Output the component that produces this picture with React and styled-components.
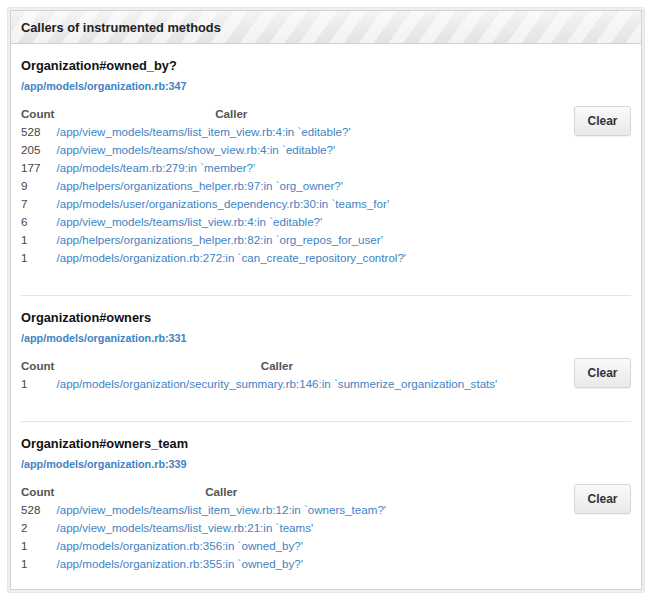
import { createGlobalStyle, styled } from "styled-components";

const GlobalStyle = createGlobalStyle`
  html, body {
    margin: 0;
    padding: 0;
    background: #ffffff;
  }
  body {
    font-family: "Liberation Sans", Arial, Helvetica, sans-serif;
    color: #333;
  }
`;

const methods = [
  {
    name: "Organization#owned_by?",
    location: "/app/models/organization.rb:347",
    callers: [
      [528, "/app/view_models/teams/list_item_view.rb:4:in `editable?'"],
      [205, "/app/view_models/teams/show_view.rb:4:in `editable?'"],
      [177, "/app/models/team.rb:279:in `member?'"],
      [9, "/app/helpers/organizations_helper.rb:97:in `org_owner?'"],
      [7, "/app/models/user/organizations_dependency.rb:30:in `teams_for'"],
      [6, "/app/view_models/teams/list_view.rb:4:in `editable?'"],
      [1, "/app/helpers/organizations_helper.rb:82:in `org_repos_for_user'"],
      [1, "/app/models/organization.rb:272:in `can_create_repository_control?'"],
    ],
  },
  {
    name: "Organization#owners",
    location: "/app/models/organization.rb:331",
    callers: [
      [1, "/app/models/organization/security_summary.rb:146:in `summerize_organization_stats'"],
    ],
  },
  {
    name: "Organization#owners_team",
    location: "/app/models/organization.rb:339",
    callers: [
      [528, "/app/view_models/teams/list_item_view.rb:12:in `owners_team?'"],
      [2, "/app/view_models/teams/list_view.rb:21:in `teams'"],
      [1, "/app/models/organization.rb:356:in `owned_by?'"],
      [1, "/app/models/organization.rb:355:in `owned_by?'"],
    ],
  },
];

export default function App() {
  return (
    <>
      <GlobalStyle />
      <Frame>
        <Box>
          <BoxHeader>Callers of instrumented methods</BoxHeader>
          <BoxBody>
            {methods.map((method) => (
              <Section key={method.name}>
                <MethodName>{method.name}</MethodName>
                <Location href="#">{method.location}</Location>
                <CallerRow>
                  <CallerTable>
                    <thead>
                      <tr>
                        <CountHead>Count</CountHead>
                        <CallerHead>Caller</CallerHead>
                      </tr>
                    </thead>
                    <tbody>
                      {method.callers.map(([count, caller], i) => (
                        <tr key={i}>
                          <CountCell>{count}</CountCell>
                          <CallerCell>
                            <a href="#">{caller}</a>
                          </CallerCell>
                        </tr>
                      ))}
                    </tbody>
                  </CallerTable>
                  <ClearButton type="button">Clear</ClearButton>
                </CallerRow>
              </Section>
            ))}
          </BoxBody>
        </Box>
      </Frame>
    </>
  );
}

const Frame = styled.div`
  margin: 7px 9px 0 7px;
  padding: 2px;
  background: #efefef;
  border: 1px solid #e6e6e6;
  border-radius: 3px;
  width: 638px;
  box-sizing: border-box;
`;

const Box = styled.div`
  background: #fff;
  border: 1px solid #d2d2d2;
`;

const BoxHeader = styled.h3`
  margin: 0;
  height: 33px;
  box-sizing: border-box;
  padding: 9px 10px 0;
  font-size: 12.8px;
  line-height: 16px;
  font-weight: bold;
  color: #222;
  border-bottom: 1px solid #d0d0d0;
  background:
    repeating-linear-gradient(
      126deg,
      rgba(255, 255, 255, 0) 0 12px,
      rgba(255, 255, 255, 0.55) 12px 24px
    ),
    linear-gradient(#f3f3f3, #e3e3e3);
`;

const BoxBody = styled.div`
  padding: 0 10px;
`;

const Section = styled.div`
  padding: 14px 0 16px;
  & + & {
    margin-top: 12px;
    border-top: 1px solid #e3e3e3;
  }
`;

const MethodName = styled.h4`
  margin: 0;
  font-size: 12.8px;
  line-height: 16px;
  font-weight: bold;
  color: #111;
`;

const Location = styled.a`
  display: block;
  margin-top: 5px;
  font-size: 10.8px;
  line-height: 14px;
  font-weight: bold;
  color: #4183c4;
  text-decoration: none;
`;

const CallerRow = styled.div`
  display: flex;
  justify-content: space-between;
  align-items: flex-start;
  margin-top: 12px;
`;

const CallerTable = styled.table`
  border-collapse: collapse;
  font-size: 11.6px;
  line-height: 18px;

  th,
  td {
    padding: 0;
  }
`;

const CountHead = styled.th`
  text-align: left;
  font-weight: bold;
  color: #555;
  && {
    padding-right: 2px;
  }
`;

const CallerHead = styled.th`
  text-align: center;
  font-weight: bold;
  color: #555;
`;

const CountCell = styled.td`
  color: #444;
`;

const CallerCell = styled.td`
  white-space: nowrap;
  a {
    color: #4183c4;
    text-decoration: none;
  }
`;

const ClearButton = styled.button`
  width: 57px;
  height: 30px;
  margin-top: 1px;
  padding: 0;
  font-family: "Liberation Sans", Arial, sans-serif;
  font-size: 12px;
  font-weight: bold;
  color: #333;
  background: linear-gradient(#fafafa, #e9e9e9);
  border: 1px solid #d6d6d6;
  border-radius: 3px;
  box-shadow: 0 1px 1px rgba(0, 0, 0, 0.06);
  cursor: pointer;
`;
